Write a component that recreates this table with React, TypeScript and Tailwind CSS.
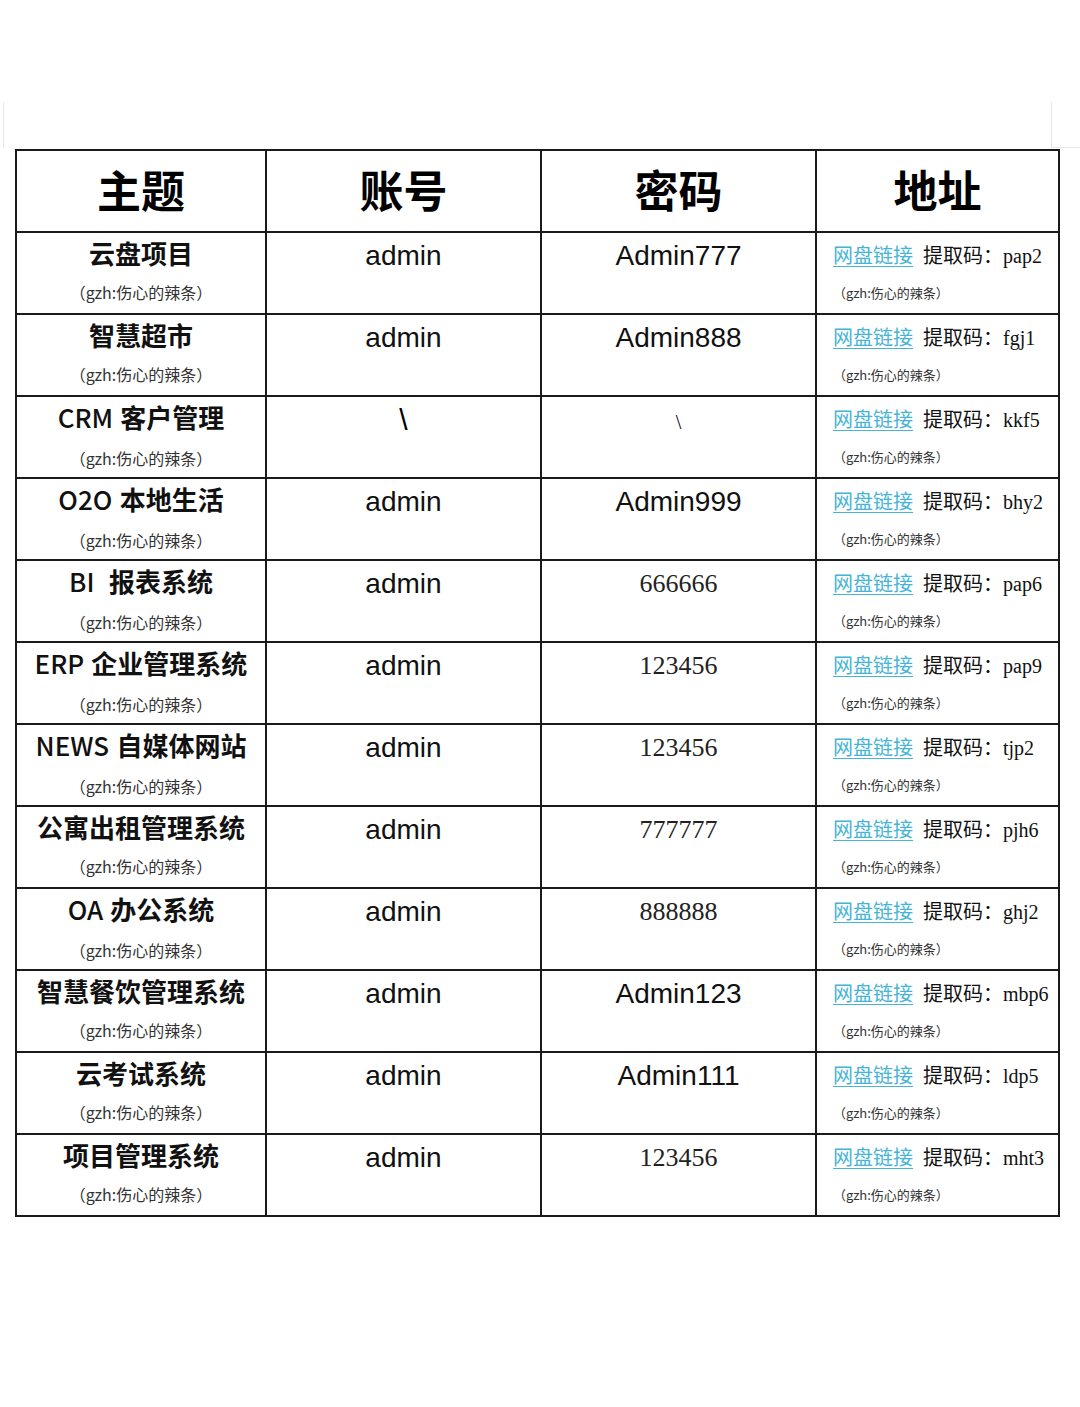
const rows = [
  { name: "云盘项目", user: "admin", pass: "Admin777", code: "pap2" },
  { name: "智慧超市", user: "admin", pass: "Admin888", code: "fgj1" },
  { name: "CRM 客户管理", user: "\\", pass: "\\", code: "kkf5" },
  { name: "O2O 本地生活", user: "admin", pass: "Admin999", code: "bhy2" },
  { name: "BI  报表系统", user: "admin", pass: "666666", code: "pap6" },
  { name: "ERP 企业管理系统", user: "admin", pass: "123456", code: "pap9" },
  { name: "NEWS 自媒体网站", user: "admin", pass: "123456", code: "tjp2" },
  { name: "公寓出租管理系统", user: "admin", pass: "777777", code: "pjh6" },
  { name: "OA 办公系统", user: "admin", pass: "888888", code: "ghj2" },
  { name: "智慧餐饮管理系统", user: "admin", pass: "Admin123", code: "mbp6" },
  { name: "云考试系统", user: "admin", pass: "Admin111", code: "ldp5" },
  { name: "项目管理系统", user: "admin", pass: "123456", code: "mht3" },
];

const cjk = "font-['Noto_Sans_CJK_SC',sans-serif]";
const sans = "font-['Liberation_Sans','Noto_Sans_CJK_SC',sans-serif]";
const serif = "font-['Liberation_Serif','Noto_Sans_CJK_SC',serif]";

function Title({ text }: { text: string }) {
  const m = text.match(/^([A-Za-z0-9]+)(\s+)(.*)$/);
  if (!m) {
    return <div className={`${cjk} text-[26px] font-bold leading-[30px] text-[#111]`}>{text}</div>;
  }
  return (
    <div className="text-[26px] leading-[30px] whitespace-pre text-[#111]">
      <span className={`${cjk} font-medium`}>{m[1]}</span>
      <span className={sans}>{m[2]}</span>
      <span className={`${cjk} font-bold`}>{m[3]}</span>
    </div>
  );
}

function Pass({ value }: { value: string }) {
  if (value === "\\") {
    return <div className={`${serif} text-[20px] leading-[30px] pt-[2px]`}>\</div>;
  }
  if (/^\d+$/.test(value)) {
    return <div className={`${serif} text-[26px] leading-[30px] text-[#222]`}>{value}</div>;
  }
  return <div className={`${sans} text-[28px] leading-[30px] text-[#111]`}>{value}</div>;
}

export default function App() {
  return (
    <div className="w-[1080px] h-[1407px] bg-white text-black">
      <div className="flex h-[149px] items-end">
        <div className="ml-[3px] h-[46px] w-px bg-[#ebebeb] mb-px" />
        <div className="flex-1" />
        <div className="w-[29px] h-[46px] border-l border-b border-[#e8e8e8] mb-px" />
      </div>
      <table className="ml-[15px] w-[1043px] table-fixed border-collapse border-2 border-[#1a1a1a]">
        <colgroup>
          <col className="w-[250px]" />
          <col className="w-[275px]" />
          <col className="w-[275px]" />
          <col className="w-[243px]" />
        </colgroup>
        <thead>
          <tr className="h-[82px]">
            {["主题", "账号", "密码", "地址"].map((h) => (
              <th
                key={h}
                className={`${cjk} border-2 border-[#1a1a1a] text-[44px] font-bold leading-none text-center align-middle pb-[4px]`}
              >
                {h}
              </th>
            ))}
          </tr>
        </thead>
        <tbody>
          {rows.map((r) => (
            <tr key={r.name} className="h-[82px]">
              <td className="border-2 border-[#1a1a1a] align-top p-0">
                <div className="flex flex-col items-center pt-[5px]">
                  <Title text={r.name} />
                  <div className={`${cjk} mt-[14px] text-[16px] leading-[20px] text-[#333]`}>（gzh:伤心的辣条）</div>
                </div>
              </td>
              <td className="border-2 border-[#1a1a1a] align-top p-0">
                <div className="flex justify-center pt-[8px]">
                  {r.user === "\\" ? (
                    <div className={`${sans} text-[30px] leading-[30px]`}>\</div>
                  ) : (
                    <div className={`${sans} text-[28px] leading-[30px] text-[#111]`}>{r.user}</div>
                  )}
                </div>
              </td>
              <td className="border-2 border-[#1a1a1a] align-top p-0">
                <div className="flex justify-center pt-[8px]">
                  <Pass value={r.pass} />
                </div>
              </td>
              <td className="border-2 border-[#1a1a1a] align-top p-0">
                <div className="flex flex-col pl-[16px] pt-[8px]">
                  <div className="flex items-baseline whitespace-nowrap leading-[28px]">
                    <span className={`${cjk} text-[20px] text-[#45b4d6] underline underline-offset-[3px] decoration-1`}>网盘链接</span>
                    <span className={`${cjk} ml-[10px] text-[20px] text-[#111]`}>提取码：</span>
                    <span className={`${serif} text-[20px] text-[#111]`}>{r.code}</span>
                  </div>
                  <div className={`${cjk} mt-[14px] text-[13px] leading-[18px] text-[#333]`}>（gzh:伤心的辣条）</div>
                </div>
              </td>
            </tr>
          ))}
        </tbody>
      </table>
    </div>
  );
}
